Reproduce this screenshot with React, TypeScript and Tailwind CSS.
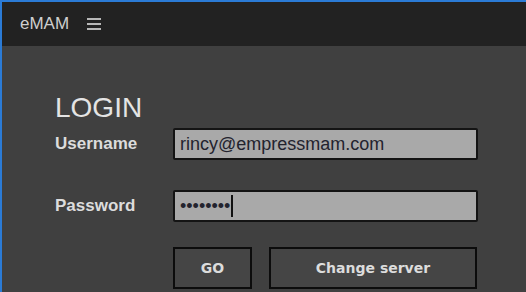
import React from "react";

function Hamburger() {
  return (
    <span className="ml-[18px] flex w-[14px] flex-col gap-[3px]">
      <span className="h-[2px] w-full bg-[#b8b8b8]" />
      <span className="h-[2px] w-full bg-[#b8b8b8]" />
      <span className="h-[2px] w-full bg-[#b8b8b8]" />
    </span>
  );
}

function Field({ children }: { children: React.ReactNode }) {
  return (
    <div className="flex h-[32px] w-[305px] items-center rounded-[2px] border-2 border-[#141414] bg-[#a9a9a9] pl-[5px] text-[18px] text-[#23232e]">
      {children}
    </div>
  );
}

export default function App() {
  return (
    <div className="h-[292px] w-[526px] overflow-hidden border-l-2 border-t-2 border-[#2b7bd6] bg-[#404040] font-['Liberation_Sans',Arial,sans-serif]">
      <header className="flex h-[44px] items-center bg-[#222222] pl-[18px]">
        <span className="text-[17px] text-[#cfcfcf]">eMAM</span>
        <Hamburger />
      </header>

      <main className="pl-[53px] pt-[48px]">
        <h1 className="text-[28px] leading-[28px] text-[#e4e4e4]">LOGIN</h1>

        <div className="mt-[6px] grid grid-cols-[118px_305px] items-center gap-y-[30px]">
          <label className="text-[17px] font-bold text-[#dcdcdc]">Username</label>
          <Field>rincy@empressmam.com</Field>

          <label className="text-[17px] font-bold text-[#dcdcdc]">Password</label>
          <Field>
            <span>••••••••</span>
            <span className="ml-[1px] h-[22px] w-[2px] bg-[#111]" />
          </Field>
        </div>

        <div className="ml-[118px] mt-[25px] flex gap-[17px] font-['DejaVu_Sans',Verdana,sans-serif] text-[14px] font-bold text-[#dcdcdc]">
          <button className="h-[42px] w-[79px] border-2 border-[#0c0c0c] bg-[#454545]">GO</button>
          <button className="h-[42px] w-[208px] border-2 border-[#0c0c0c] bg-[#454545]">Change server</button>
        </div>
      </main>
    </div>
  );
}
